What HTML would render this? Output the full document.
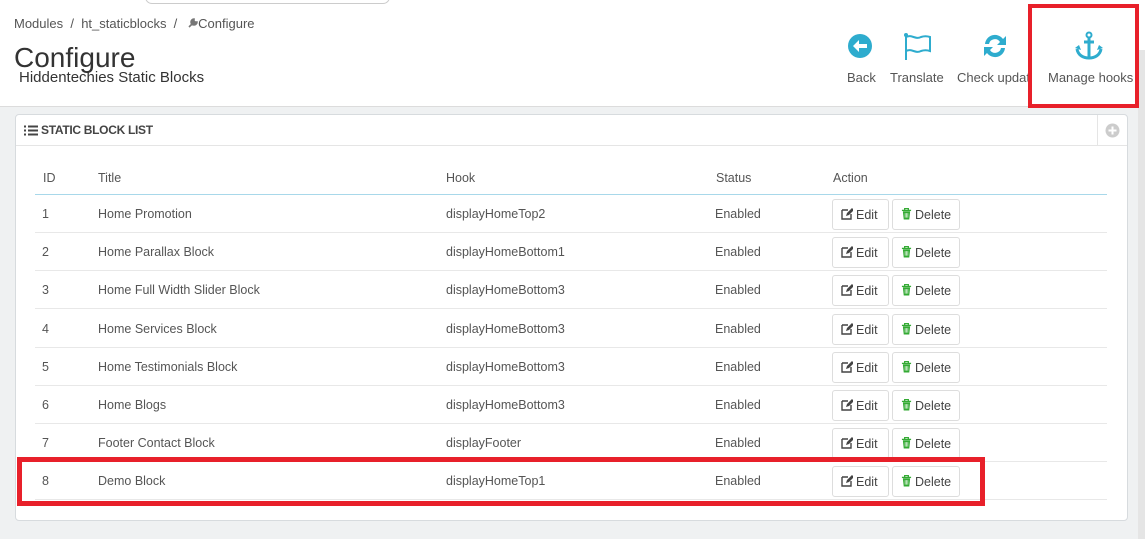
<!DOCTYPE html><html><head><style>
*{margin:0;padding:0;box-sizing:border-box}
body{width:1145px;height:539px;overflow:hidden;background:#eff1f2;font-family:"Liberation Sans",sans-serif;position:relative;color:#555}
.hdr{position:absolute;left:0;top:0;width:1145px;height:107px;background:#fff;border-bottom:1px solid #dcdcdc}
.a{position:absolute}
.t{font-size:13px;color:#555}
.panel{position:absolute;left:15px;top:114px;width:1113px;height:407px;background:#fff;border:1px solid #d7dbde;border-radius:4px}
.row{position:absolute;left:35px;width:1072px;height:38px;border-bottom:1px solid #e8e8e8}
.row span{position:absolute;top:12px;font-size:12.5px;color:#555}
.btn{position:absolute;top:4px;height:31px;border:1px solid #ddd;border-radius:3px;font-size:12.5px;color:#444;padding:8px 0 0 8px;background:#fff;white-space:nowrap}
.btn svg{vertical-align:-1px;margin-right:3px}
.red{position:absolute;border:5px solid #e8202a}
</style></head><body>
<div class="hdr"></div>
<div class="a" style="left:145px;top:-10px;width:245px;height:14px;border:1px solid #ccc;border-radius:8px;background:#fff"></div>
<div class="a t" style="left:14px;top:16px">Modules &nbsp;/ &nbsp;ht_staticblocks &nbsp;/ &nbsp; <svg width="10" height="10" viewBox="0 0 10 10"><path d="M1 9l5-5M6 1a3 3 0 1 0 3 3l-2 0-1-1z" stroke="#777" stroke-width="1.6" fill="#777"/></svg>Configure</div>
<div class="a" style="left:14px;top:42px;font-size:28px;color:#333">Configure</div>
<div class="a" style="left:19px;top:69px;font-size:15px;color:#333">Hiddentechies Static Blocks</div>
<svg class="a" style="left:847px;top:33px" width="26" height="26" viewBox="0 0 26 26"><circle cx="13" cy="13" r="12" fill="#2eacce"/><path d="M6 13l6-6v4h8v4h-8v4z" fill="#fff"/></svg>
<div class="a t" style="left:847px;top:70px">Back</div>
<svg class="a" style="left:903px;top:32px" width="30" height="28" viewBox="0 0 30 28"><path d="M3 2v26" stroke="#2eacce" stroke-width="2"/><circle cx="3" cy="3" r="2" fill="#2eacce"/><path d="M3 5c6-3 9 3 15 0 3-1 6-1 9 0v14c-3-1-6-1-9 0-6 3-9-3-15 0" fill="none" stroke="#2eacce" stroke-width="2"/></svg>
<div class="a t" style="left:890px;top:70px">Translate</div>
<svg class="a" style="left:981px;top:32px" width="28" height="28" viewBox="0 0 28 28"><path d="M4 12a10 10 0 0 1 18-5l3-3v9h-9l3-3a6 6 0 0 0-11 2z" fill="#2eacce"/><path d="M24 16a10 10 0 0 1-18 5l-3 3v-9h9l-3 3a6 6 0 0 0 11-2z" fill="#2eacce"/></svg>
<div class="a t" style="left:957px;top:70px;width:74px;overflow:hidden;white-space:nowrap">Check update</div>
<svg class="a" style="left:1074px;top:31px" width="30" height="30" viewBox="0 0 30 30"><circle cx="15" cy="4" r="2.5" fill="none" stroke="#2eacce" stroke-width="2"/><path d="M15 6v21M10 11h10M3 18c1 6 6 9 12 9s11-3 12-9" fill="none" stroke="#2eacce" stroke-width="3"/><path d="M1 17l4-3 2 5zM29 17l-4-3-2 5z" fill="#2eacce"/></svg>
<div class="a t" style="left:1048px;top:70px">Manage hooks</div>
<div class="a" style="left:1138px;top:50px;width:7px;height:489px;background:#e5e5e5"></div>
<div class="panel">
<div class="a" style="left:0;top:0;width:1111px;height:31px;border-bottom:1px solid #e5e5e5"></div>
<div class="a" style="left:1081px;top:0;width:1px;height:31px;background:#e5e5e5"></div>
<svg class="a" style="left:1089px;top:8px" width="15" height="15"><circle cx="7.5" cy="7.5" r="7" fill="#ccc"/><path d="M7.5 3.5v8M3.5 7.5h8" stroke="#fff" stroke-width="2"/></svg>
<svg class="a" style="left:8px;top:10px" width="14" height="11" viewBox="0 0 14 11"><path d="M0 1.5h2M4 1.5h10M0 5.5h2M4 5.5h10M0 9.5h2M4 9.5h10" stroke="#444" stroke-width="2"/></svg>
<div class="a" style="left:25px;top:8px;font-size:12px;color:#444;font-weight:bold;letter-spacing:-0.3px">STATIC BLOCK LIST</div>
</div>
<div class="a" style="left:35px;top:170px;width:1072px;height:25px;border-bottom:1px solid #a8d8ea"></div>
<div class="a t" style="left:43px;top:171px;font-size:12.5px">ID</div>
<div class="a t" style="left:98px;top:171px;font-size:12.5px">Title</div>
<div class="a t" style="left:446px;top:171px;font-size:12.5px">Hook</div>
<div class="a t" style="left:716px;top:171px;font-size:12.5px">Status</div>
<div class="a t" style="left:833px;top:171px;font-size:12.5px">Action</div>
<svg width="0" height="0" style="position:absolute"><defs>
<symbol id="e" viewBox="0 0 12 12"><path d="M1 2h6M1 2v9h9V6" fill="none" stroke="#444" stroke-width="1.4"/><path d="M5 8l1-3 5-5 2 2-5 5z" fill="#444"/></symbol>
<symbol id="d" viewBox="0 0 12 12"><path d="M1 2h10M4 2V0h4v2" stroke="#3a3" stroke-width="1.4" fill="none"/><path d="M2 3h8l-1 9H3z" fill="#3a3"/><path d="M4.5 5v5M6 5v5M7.5 5v5" stroke="#fff" stroke-width=".7"/></symbol>
</defs></svg>
<div class="row" style="top:195px"><span style="left:7px">1</span><span style="left:63px">Home Promotion</span><span style="left:411px">displayHomeTop2</span><span style="left:680px">Enabled</span><div class="btn" style="left:797px;width:57px"><svg width="12" height="12"><use href="#e"/></svg>Edit</div><div class="btn" style="left:857px;width:68px"><svg width="11" height="12"><use href="#d"/></svg>Delete</div></div>
<div class="row" style="top:233px"><span style="left:7px">2</span><span style="left:63px">Home Parallax Block</span><span style="left:411px">displayHomeBottom1</span><span style="left:680px">Enabled</span><div class="btn" style="left:797px;width:57px"><svg width="12" height="12"><use href="#e"/></svg>Edit</div><div class="btn" style="left:857px;width:68px"><svg width="11" height="12"><use href="#d"/></svg>Delete</div></div>
<div class="row" style="top:271px"><span style="left:7px">3</span><span style="left:63px">Home Full Width Slider Block</span><span style="left:411px">displayHomeBottom3</span><span style="left:680px">Enabled</span><div class="btn" style="left:797px;width:57px"><svg width="12" height="12"><use href="#e"/></svg>Edit</div><div class="btn" style="left:857px;width:68px"><svg width="11" height="12"><use href="#d"/></svg>Delete</div></div>
<div class="row" style="top:310px"><span style="left:7px">4</span><span style="left:63px">Home Services Block</span><span style="left:411px">displayHomeBottom3</span><span style="left:680px">Enabled</span><div class="btn" style="left:797px;width:57px"><svg width="12" height="12"><use href="#e"/></svg>Edit</div><div class="btn" style="left:857px;width:68px"><svg width="11" height="12"><use href="#d"/></svg>Delete</div></div>
<div class="row" style="top:348px"><span style="left:7px">5</span><span style="left:63px">Home Testimonials Block</span><span style="left:411px">displayHomeBottom3</span><span style="left:680px">Enabled</span><div class="btn" style="left:797px;width:57px"><svg width="12" height="12"><use href="#e"/></svg>Edit</div><div class="btn" style="left:857px;width:68px"><svg width="11" height="12"><use href="#d"/></svg>Delete</div></div>
<div class="row" style="top:386px"><span style="left:7px">6</span><span style="left:63px">Home Blogs</span><span style="left:411px">displayHomeBottom3</span><span style="left:680px">Enabled</span><div class="btn" style="left:797px;width:57px"><svg width="12" height="12"><use href="#e"/></svg>Edit</div><div class="btn" style="left:857px;width:68px"><svg width="11" height="12"><use href="#d"/></svg>Delete</div></div>
<div class="row" style="top:424px"><span style="left:7px">7</span><span style="left:63px">Footer Contact Block</span><span style="left:411px">displayFooter</span><span style="left:680px">Enabled</span><div class="btn" style="left:797px;width:57px"><svg width="12" height="12"><use href="#e"/></svg>Edit</div><div class="btn" style="left:857px;width:68px"><svg width="11" height="12"><use href="#d"/></svg>Delete</div></div>
<div class="row" style="top:462px"><span style="left:7px">8</span><span style="left:63px">Demo Block</span><span style="left:411px">displayHomeTop1</span><span style="left:680px">Enabled</span><div class="btn" style="left:797px;width:57px"><svg width="12" height="12"><use href="#e"/></svg>Edit</div><div class="btn" style="left:857px;width:68px"><svg width="11" height="12"><use href="#d"/></svg>Delete</div></div>
<div class="red" style="left:17px;top:457px;width:968px;height:49px"></div>
<div class="red" style="left:1028px;top:4px;width:111px;height:104px;border-width:4px"></div>
</body></html>
